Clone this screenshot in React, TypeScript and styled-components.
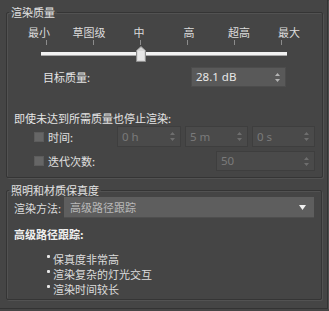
import React from 'react';
import styled, { createGlobalStyle } from 'styled-components';

const GlobalStyle = createGlobalStyle`
  html, body {
    margin: 0;
    padding: 0;
    background: #454545;
  }
  body {
    font-family: "Noto Sans CJK SC", "Noto Sans", sans-serif;
    font-size: 11px;
    color: #dcdcdc;
  }
`;

/*************************************************************************/

const Panel = styled.div`
  width: 328px;
  height: 309px;
  box-sizing: border-box;
  padding: 6px 0 0 6px;
  border-right: 1px solid #333;
  border-bottom: 1px solid #333;
  box-shadow: 1px 1px 0 #505050;
`;

const Group = styled.fieldset<{ $gap?: number; $pb: number }>`
  margin: ${p => p.$gap || 0}px 0 0 0;
  padding: 0 7px ${p => p.$pb}px 7px;
  width: 316px;
  box-sizing: border-box;
  border: 1px solid #353535;
  border-radius: 2px;
  box-shadow: 1px 1px 0 #525252, inset 1px 1px 0 #525252;
`;

const Legend = styled.legend`
  margin-left: -5px;
  padding: 0 2px;
  line-height: 13px;
  color: #e2e2e2;
`;

/*************************************************************************/

const LabelRow = styled.div`
  margin-top: 6px;
  display: grid;
  grid-template-columns: repeat(6, 50px);
  line-height: 14px;
  text-align: center;
`;

const TickRow = styled.div`
  margin: 1px 0 0 32px;
  width: 236px;
  height: 5px;
  display: flex;
  justify-content: space-between;
`;

const Tick = styled.span`
  width: 1px;
  height: 5px;
  background: #8c8c8c;
`;

const SliderBox = styled.div`
  position: relative;
  margin: 1px 0 0 27px;
  width: 246px;
  height: 16px;
  display: flex;
  align-items: center;
`;

const Track = styled.div`
  width: 100%;
  height: 4px;
  box-sizing: border-box;
  background: #f2f2f2;
  border-bottom: 1px solid #a8a8a8;
`;

const Thumb = styled.svg`
  position: absolute;
  top: 0;
`;

/*************************************************************************/

const TargetRow = styled.div`
  margin-top: 5px;
  display: grid;
  grid-template-columns: 148px 95px;
  padding-left: 29px;
  align-items: center;
  line-height: 14px;
  color: #e4e4e4;
`;

const SpinBox = styled.div<{ $w: number; $h?: number; $off?: boolean }>`
  width: ${p => p.$w}px;
  height: ${p => p.$h || 20}px;
  box-sizing: border-box;
  display: flex;
  align-items: center;
  justify-content: space-between;
  padding: 0 5px 0 4px;
  background: ${p => (p.$off ? '#4a4a4a' : '#595959')};
  border: 1px solid ${p => (p.$off ? '#3e3e3e' : '#4c4c4c')};
  font-family: "Noto Sans", sans-serif;
  font-size: 11.5px;
  color: ${p => (p.$off ? '#7a7a7a' : '#e8e8e8')};
`;

const StopLabel = styled.div`
  margin-top: 24px;
  line-height: 14px;
  color: #e4e4e4;
`;

const CheckRow = styled.div<{ $mt: number }>`
  margin-top: ${p => p.$mt}px;
  display: flex;
  align-items: center;
  padding-left: 20px;
  line-height: 14px;
`;

const Check = styled.span`
  width: 10px;
  height: 10px;
  box-sizing: border-box;
  background: #666;
  border: 1px solid #5c5c5c;
  margin-right: 4px;
`;

const CheckText = styled.span<{ $w: number }>`
  width: ${p => p.$w}px;
  color: #e0e0e0;
`;

const SpinGroup = styled.div`
  display: flex;
  gap: 4px;
`;

/*************************************************************************/

const MethodRow = styled.div`
  display: grid;
  grid-template-columns: 50px 250px;
  align-items: center;
  line-height: 14px;
`;

const Dropdown = styled.div`
  height: 21px;
  box-sizing: border-box;
  display: flex;
  align-items: center;
  justify-content: space-between;
  padding: 0 8px 0 6px;
  background: #5e5e5e;
  border-bottom: 1px solid #4e4e4e;
  color: #b9b9b9;
`;

const SubTitle = styled.div`
  margin-top: 9px;
  line-height: 14px;
  font-weight: bold;
  color: #f0f0f0;
`;

const BulletList = styled.ul`
  margin: 11px 0 0 0;
  padding: 0 0 0 33px;
  list-style: none;
  line-height: 15px;
`;

const Bullet = styled.li`
  display: flex;
  align-items: flex-start;
  &::before {
    content: '';
    width: 3px;
    height: 3px;
    margin: 3px 3px 0 0;
    border-radius: 1px;
    background: #e6e6e6;
  }
`;

/*************************************************************************/

const Arrows = ({ off = false }) => (
  <svg width="5" height="9" viewBox="0 0 5 9">
    <path d="M2.5 0 L5 3 L0 3 Z M0 6 L5 6 L2.5 9 Z" fill={off ? '#6e6e6e' : '#b4b4b4'} />
  </svg>
);

const marks = ['最小', '草图级', '中', '高', '超高', '最大'];

export default function App() {
  return (
    <Panel>
      <GlobalStyle />
      <Group $pb={6}>
        <Legend>渲染质量</Legend>
        <LabelRow>
          {marks.map(m => (
            <span key={m}>{m}</span>
          ))}
        </LabelRow>
        <TickRow>
          {marks.map(m => (
            <Tick key={m} />
          ))}
        </TickRow>
        <SliderBox>
          <Track />
          <Thumb width="10" height="16" viewBox="0 0 10 16" style={{ left: 95 }}>
            <path d="M5 0.5 L9.5 4.5 L9.5 15.5 L0.5 15.5 L0.5 4.5 Z" fill="#d6d6d6" stroke="#8e8e8e" />
            <rect x="2" y="5" width="6" height="9" fill="#e6e6e6" />
          </Thumb>
        </SliderBox>
        <TargetRow>
          <span>目标质量:</span>
          <SpinBox $w={95} $h={20}>
            <span>28.1 dB</span>
            <Arrows />
          </SpinBox>
        </TargetRow>
        <StopLabel>即使未达到所需质量也停止渲染:</StopLabel>
        <CheckRow $mt={1}>
          <Check />
          <CheckText $w={69}>时间:</CheckText>
          <SpinGroup>
            <SpinBox $w={64} $h={21} $off>
              <span>0 h</span>
              <Arrows off />
            </SpinBox>
            <SpinBox $w={63} $h={21} $off>
              <span>5 m</span>
              <Arrows off />
            </SpinBox>
            <SpinBox $w={63} $h={21} $off>
              <span>0 s</span>
              <Arrows off />
            </SpinBox>
          </SpinGroup>
        </CheckRow>
        <CheckRow $mt={4}>
          <Check />
          <CheckText $w={168}>迭代次数:</CheckText>
          <SpinBox $w={99} $h={20} $off>
            <span>50</span>
            <Arrows off />
          </SpinBox>
        </CheckRow>
      </Group>
      <Group $gap={6} $pb={2}>
        <Legend>照明和材质保真度</Legend>
        <MethodRow>
          <span>渲染方法:</span>
          <Dropdown>
            <span>高级路径跟踪</span>
            <svg width="7" height="5" viewBox="0 0 7 5">
              <path d="M0 0 L7 0 L3.5 5 Z" fill="#f0f0f0" />
            </svg>
          </Dropdown>
        </MethodRow>
        <SubTitle>高级路径跟踪:</SubTitle>
        <BulletList>
          <Bullet>保真度非常高</Bullet>
          <Bullet>渲染复杂的灯光交互</Bullet>
          <Bullet>渲染时间较长</Bullet>
        </BulletList>
      </Group>
    </Panel>
  );
}
